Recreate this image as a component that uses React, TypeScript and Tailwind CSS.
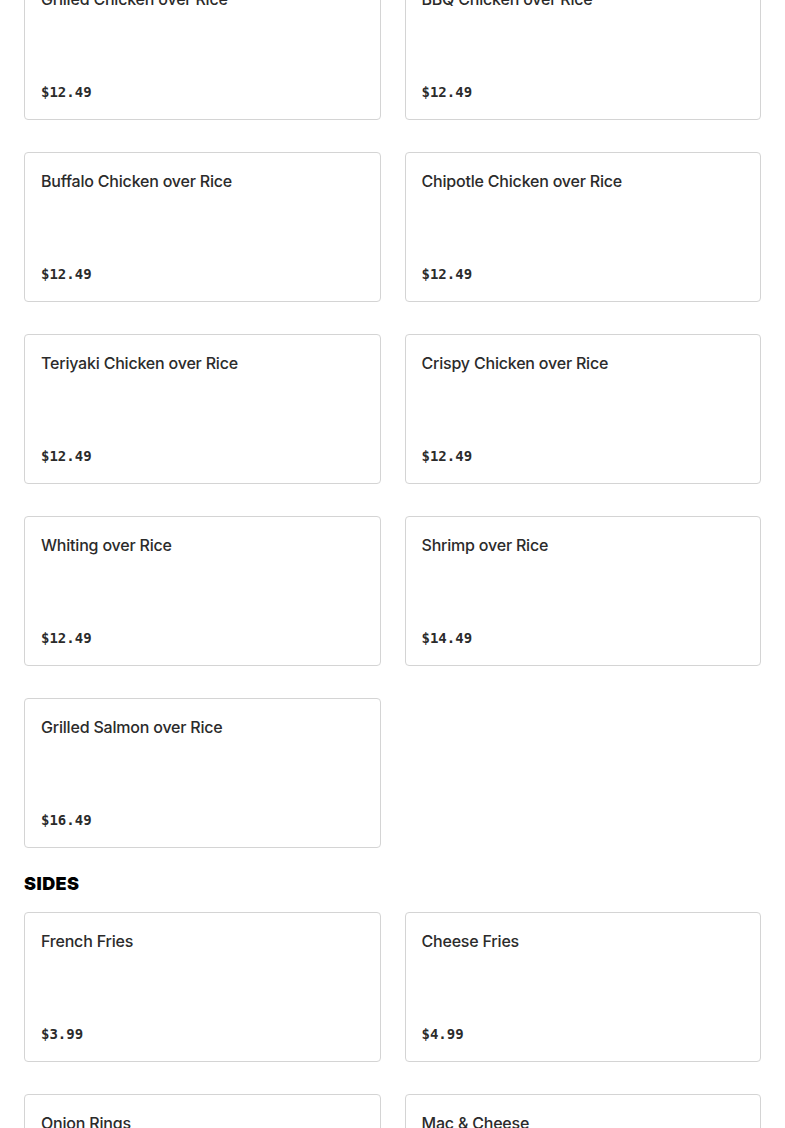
const entrees = [
    { name: 'Grilled Chicken over Rice', price: '$12.49' },
    { name: 'BBQ Chicken over Rice', price: '$12.49' },
    { name: 'Buffalo Chicken over Rice', price: '$12.49' },
    { name: 'Chipotle Chicken over Rice', price: '$12.49' },
    { name: 'Teriyaki Chicken over Rice', price: '$12.49' },
    { name: 'Crispy Chicken over Rice', price: '$12.49' },
    { name: 'Whiting over Rice', price: '$12.49' },
    { name: 'Shrimp over Rice', price: '$14.49' },
    { name: 'Grilled Salmon over Rice', price: '$16.49' },
];

const sides = [
    { name: 'French Fries', price: '$3.99' },
    { name: 'Cheese Fries', price: '$4.99' },
    { name: 'Onion Rings', price: '$4.99' },
    { name: 'Mac & Cheese', price: '$4.99' },
];

type Item = { name: string; price: string };

function MenuCard({ item }: { item: Item }) {
    return (
        <div className="flex h-[150px] flex-col justify-between rounded border border-[#d4d4d4] bg-white px-4 pt-4 pb-[17px]">
            <h3 className="text-base leading-6 font-medium tracking-[-0.2px] text-[#2b2b2b]">{item.name}</h3>
            <span className="font-['DejaVu_Sans_Mono',monospace] text-sm leading-5 font-semibold text-[#2b2b2b]">
                {item.price}
            </span>
        </div>
    );
}

function Grid({ items }: { items: Item[] }) {
    return (
        <div className="grid grid-cols-2 gap-x-6 gap-y-8">
            {items.map((item) => (
                <MenuCard key={item.name} item={item} />
            ))}
        </div>
    );
}

export default function App() {
    return (
        <div className="min-h-screen bg-white font-['Inter',sans-serif]">
            <div className="-mt-[30px] px-6">
                <Grid items={entrees} />
                <h2 className="mt-[22px] mb-[14px] text-lg leading-7 font-black tracking-wide text-black uppercase">
                    Sides
                </h2>
                <Grid items={sides} />
            </div>
        </div>
    );
}
